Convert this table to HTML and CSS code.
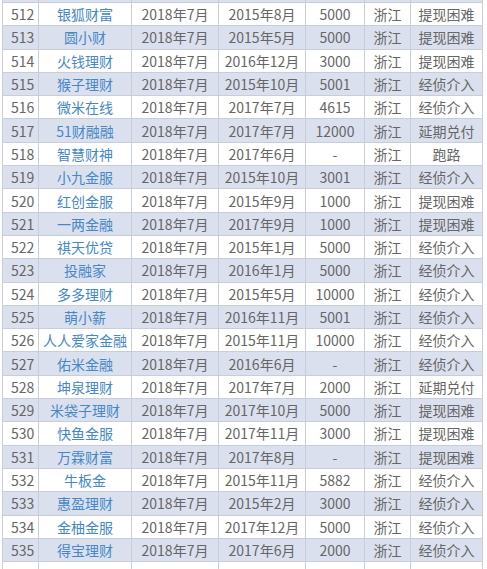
FILE: index.html
```html
<!DOCTYPE html>
<html lang="zh">
<head>
<meta charset="utf-8">
<link rel="stylesheet" href="styles.css">
</head>
<body>
<div class="sheet">
<table class="grid">
<colgroup>
<col class="c-no"><col class="c-name"><col class="c-date"><col class="c-date2"><col class="c-amt"><col class="c-prov"><col class="c-state">
</colgroup>
<tbody>
<tr class="cut-top alt"><td></td><td></td><td></td><td></td><td></td><td></td><td></td></tr>
<tr><td class="no">512</td><td class="name">银狐财富</td><td>2018年7月</td><td>2015年8月</td><td>5000</td><td>浙江</td><td>提现困难</td></tr>
<tr class="alt"><td class="no">513</td><td class="name">圆小财</td><td>2018年7月</td><td>2015年5月</td><td>5000</td><td>浙江</td><td>提现困难</td></tr>
<tr><td class="no">514</td><td class="name">火钱理财</td><td>2018年7月</td><td>2016年12月</td><td>3000</td><td>浙江</td><td>提现困难</td></tr>
<tr class="alt"><td class="no">515</td><td class="name">猴子理财</td><td>2018年7月</td><td>2015年10月</td><td>5001</td><td>浙江</td><td>经侦介入</td></tr>
<tr><td class="no">516</td><td class="name">微米在线</td><td>2018年7月</td><td>2017年7月</td><td>4615</td><td>浙江</td><td>经侦介入</td></tr>
<tr class="alt"><td class="no">517</td><td class="name">51财融融</td><td>2018年7月</td><td>2017年7月</td><td>12000</td><td>浙江</td><td>延期兑付</td></tr>
<tr><td class="no">518</td><td class="name">智慧财神</td><td>2018年7月</td><td>2017年6月</td><td>-</td><td>浙江</td><td>跑路</td></tr>
<tr class="alt"><td class="no">519</td><td class="name">小九金服</td><td>2018年7月</td><td>2015年10月</td><td>3001</td><td>浙江</td><td>经侦介入</td></tr>
<tr><td class="no">520</td><td class="name">红创金服</td><td>2018年7月</td><td>2015年9月</td><td>1000</td><td>浙江</td><td>提现困难</td></tr>
<tr class="alt"><td class="no">521</td><td class="name">一两金融</td><td>2018年7月</td><td>2017年9月</td><td>1000</td><td>浙江</td><td>提现困难</td></tr>
<tr><td class="no">522</td><td class="name">祺天优贷</td><td>2018年7月</td><td>2015年1月</td><td>5000</td><td>浙江</td><td>经侦介入</td></tr>
<tr class="alt"><td class="no">523</td><td class="name">投融家</td><td>2018年7月</td><td>2016年1月</td><td>5000</td><td>浙江</td><td>经侦介入</td></tr>
<tr><td class="no">524</td><td class="name">多多理财</td><td>2018年7月</td><td>2015年5月</td><td>10000</td><td>浙江</td><td>经侦介入</td></tr>
<tr class="alt"><td class="no">525</td><td class="name">萌小薪</td><td>2018年7月</td><td>2016年11月</td><td>5001</td><td>浙江</td><td>经侦介入</td></tr>
<tr><td class="no">526</td><td class="name">人人爱家金融</td><td>2018年7月</td><td>2015年11月</td><td>10000</td><td>浙江</td><td>经侦介入</td></tr>
<tr class="alt"><td class="no">527</td><td class="name">佑米金融</td><td>2018年7月</td><td>2016年6月</td><td>-</td><td>浙江</td><td>经侦介入</td></tr>
<tr><td class="no">528</td><td class="name">坤泉理财</td><td>2018年7月</td><td>2017年7月</td><td>2000</td><td>浙江</td><td>延期兑付</td></tr>
<tr class="alt"><td class="no">529</td><td class="name">米袋子理财</td><td>2018年7月</td><td>2017年10月</td><td>5000</td><td>浙江</td><td>提现困难</td></tr>
<tr><td class="no">530</td><td class="name">快鱼金服</td><td>2018年7月</td><td>2017年11月</td><td>3000</td><td>浙江</td><td>提现困难</td></tr>
<tr class="alt"><td class="no">531</td><td class="name">万霖财富</td><td>2018年7月</td><td>2017年8月</td><td>-</td><td>浙江</td><td>提现困难</td></tr>
<tr><td class="no">532</td><td class="name">牛板金</td><td>2018年7月</td><td>2015年11月</td><td>5882</td><td>浙江</td><td>经侦介入</td></tr>
<tr class="alt"><td class="no">533</td><td class="name">惠盈理财</td><td>2018年7月</td><td>2015年2月</td><td>3000</td><td>浙江</td><td>经侦介入</td></tr>
<tr><td class="no">534</td><td class="name">金柚金服</td><td>2018年7月</td><td>2017年12月</td><td>5000</td><td>浙江</td><td>经侦介入</td></tr>
<tr class="alt"><td class="no">535</td><td class="name">得宝理财</td><td>2018年7月</td><td>2017年6月</td><td>2000</td><td>浙江</td><td>经侦介入</td></tr>
<tr class="cut-bottom"><td></td><td></td><td></td><td></td><td></td><td></td><td></td></tr>
</tbody>
</table>
</div>
</body>
</html>
```

FILE: styles.css
```css
html, body {
  margin: 0;
  padding: 0;
  background: #ffffff;
}

.sheet {
  width: 487px;
  height: 569px;
  overflow: hidden;
  padding-left: 2px;
  box-sizing: border-box;
}

.grid {
  border-collapse: collapse;
  table-layout: fixed;
  width: 480px;
  font-family: "Noto Sans CJK SC", "Noto Sans", sans-serif;
  font-size: 14px;
  color: #666666;
}

.c-no { width: 36px; }
.c-name { width: 93px; }
.c-date { width: 87px; }
.c-date2 { width: 87px; }
.c-amt { width: 59px; }
.c-prov { width: 46px; }
.c-state { width: 72px; }

.grid td {
  border: 1px solid #c9cdd8;
  height: 22.3px;
  padding: 0;
  text-align: center;
  line-height: 20px;
  white-space: nowrap;
  overflow: hidden;
}

.grid tr.alt td {
  background: #dbe0ef;
}

.grid td.no {
  text-align: left;
  padding-left: 8px;
}

.grid td.name {
  color: #4688c6;
}

.grid tr.cut-top td {
  height: 2px;
  line-height: 0;
  border-top: none;
}

.grid tr.cut-bottom td {
  height: 8px;
  line-height: 0;
  border-bottom: none;
}
```
